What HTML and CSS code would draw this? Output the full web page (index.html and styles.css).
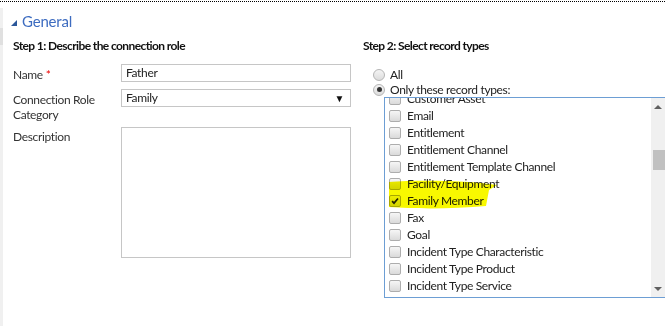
FILE: index.html
```html
<!DOCTYPE html>
<html>
<head>
<meta charset="utf-8">
<link rel="stylesheet" href="styles.css">
</head>
<body>
<div class="page">
  <div class="dots"></div>
  <div class="main">
    <div class="strip"><div class="strip-dark"></div></div>
    <div class="content">
      <div class="section-title"><span class="tri"></span><span>General</span></div>
      <div class="columns">
        <div class="col-left">
          <div class="step">Step 1: Describe the connection role</div>
          <div class="form">
            <div class="row row-name">
              <div class="label">Name<span class="req">*</span></div>
              <div class="input">Father</div>
            </div>
            <div class="row row-cat">
              <div class="label">Connection Role<br>Category</div>
              <div class="input select"><span>Family</span><span class="arrow">▼</span></div>
            </div>
            <div class="row row-desc">
              <div class="label">Description</div>
              <div class="textarea"></div>
            </div>
          </div>
        </div>
        <div class="col-right">
          <div class="step">Step 2: Select record types</div>
          <div class="radios">
            <div class="radio-row"><span class="radio"></span><span>All</span></div>
            <div class="radio-row"><span class="radio on"></span><span>Only these record types:</span></div>
          </div>
          <div class="listbox">
            <div class="list">
              <div class="items">
                <div class="item"><span class="cb"></span><span>Customer Asset</span></div>
                <div class="item"><span class="cb"></span><span>Email</span></div>
                <div class="item"><span class="cb"></span><span>Entitlement</span></div>
                <div class="item"><span class="cb"></span><span>Entitlement Channel</span></div>
                <div class="item"><span class="cb"></span><span>Entitlement Template Channel</span></div>
                <div class="item"><span class="cb"></span><span>Facility/Equipment</span></div>
                <div class="item"><span class="cb checked"><svg viewBox="0 0 12 12" width="12" height="12"><path d="M2.5 6.2 L4.8 8.6 L9.6 3" fill="none" stroke="#222" stroke-width="2"/></svg></span><span>Family Member</span></div>
                <div class="item"><span class="cb"></span><span>Fax</span></div>
                <div class="item"><span class="cb"></span><span>Goal</span></div>
                <div class="item"><span class="cb"></span><span>Incident Type Characteristic</span></div>
                <div class="item"><span class="cb"></span><span>Incident Type Product</span></div>
                <div class="item"><span class="cb"></span><span>Incident Type Service</span></div>
                <div class="item"><span class="cb"></span><span>Knowledge Article</span></div>
              </div>
            </div>
            <div class="scrollbar">
              <div class="sb-up"></div>
              <div class="sb-track"><div class="sb-thumb"></div></div>
              <div class="sb-down"></div>
            </div>
          </div>
        </div>
      </div>
    </div>
  </div>
  <svg class="highlight" width="120" height="40" viewBox="0 0 120 40">
    <path d="M4 6 C30 4 80 4 112 9 L104 14 L101 30 C70 33 30 33 4 31 Z" fill="#f8f800"/>
  </svg>
</div>
</body>
</html>
```
FILE: styles.css
```css
* { box-sizing: border-box; }
html, body { margin: 0; padding: 0; background: #fff; }
body {
  font-family: "Lato", "Open Sans", sans-serif;
  font-size: 12px;
  letter-spacing: -0.35px;
  color: #222;
  width: 665px;
  height: 326px;
  overflow: hidden;
}
.page { position: relative; width: 665px; height: 326px; overflow: hidden; }
.dots { margin-top: 1px; border-top: 1px dotted #000; height: 1px; }
.main { display: flex; height: 324px; }
.strip { width: 3px; margin-top: 6px; background: #f0f0f0; }
.strip-dark { height: 17px; margin-top: 20px; background: #e0e0e0; }
.content { flex: 1; padding-left: 8px; }
.section-title {
  display: flex; align-items: center; gap: 5px;
  height: 24px; margin-top: 7px;
  color: #3d6cc0; font-size: 15px; letter-spacing: -0.2px;
}
.tri {
  width: 0; height: 0;
  border-left: 6px solid transparent;
  border-bottom: 6px solid #2b579a;
  margin-top: 3px;
}
.columns { display: flex; }
.col-left { width: 340px; padding-left: 2px; }
.col-right { flex: 1; padding-left: 12px; }
.step {
  font-weight: 700; color: #111; height: 18px; line-height: 18px; margin-top: 4px;
  letter-spacing: -0.6px;
}
.form { margin-top: 9px; display: flex; flex-direction: column; }
.row { display: flex; }
.label { width: 108px; color: #333; line-height: 15px; padding-top: 3px; }
.req { color: #e00; margin-left: 3px; }
.input {
  width: 230px; height: 18px; border: 1px solid #c6c6c6;
  padding: 0 4px; line-height: 16px; color: #222;
}
.row-cat { margin-top: 7px; }
.select { display: flex; justify-content: space-between; align-items: center; }
.arrow { font-size: 10px; color: #111; margin-right: 2px; }
.row-desc { margin-top: 5px; }
.row-desc .label { padding-top: 2px; }
.textarea { width: 230px; height: 131px; border: 1px solid #c6c6c6; }
.radios { margin-top: 13px; display: flex; flex-direction: column; gap: 2px; padding-left: 10px; }
.radio-row { display: flex; align-items: center; gap: 5px; height: 13px; color: #222; }
.radio {
  width: 12px; height: 12px; border-radius: 50%;
  border: 1px solid #b5b5b5;
  background: linear-gradient(#f4f4f4, #dcdcdc);
  display: flex; align-items: center; justify-content: center;
}
.radio.on::after {
  content: ""; width: 5px; height: 5px; border-radius: 50%; background: #333;
}
.listbox {
  margin-top: 1px; margin-left: 21px;
  height: 201px; display: flex;
  border: 1px solid #6d9ed4; border-right: none;
}
.list { flex: 1; overflow: hidden; }
.items { margin-top: -8px; padding-left: 4px; }
.item { display: flex; align-items: center; gap: 6px; height: 17px; color: #222; }
.cb {
  width: 12px; height: 12px; border-radius: 2px;
  border: 1px solid #adadad;
  background: linear-gradient(#f6f6f6, #dadada);
  display: flex; align-items: center; justify-content: center;
}
.cb svg { display: block; }
.scrollbar { width: 14px; background: #f0f0f0; display: flex; flex-direction: column; }
.sb-up, .sb-down { height: 17px; display: flex; align-items: center; justify-content: center; }
.sb-up::after {
  content: ""; width: 0; height: 0;
  border-left: 4px solid transparent; border-right: 4px solid transparent;
  border-bottom: 4px solid #606060;
}
.sb-down::after {
  content: ""; width: 0; height: 0;
  border-left: 4px solid transparent; border-right: 4px solid transparent;
  border-top: 4px solid #606060;
}
.sb-track { flex: 1; padding-top: 35px; padding-left: 2px; }
.sb-thumb { height: 20px; background: #c1c1c1; }
.highlight {
  position: absolute; left: 385px; top: 176px;
  mix-blend-mode: multiply;
}
```
